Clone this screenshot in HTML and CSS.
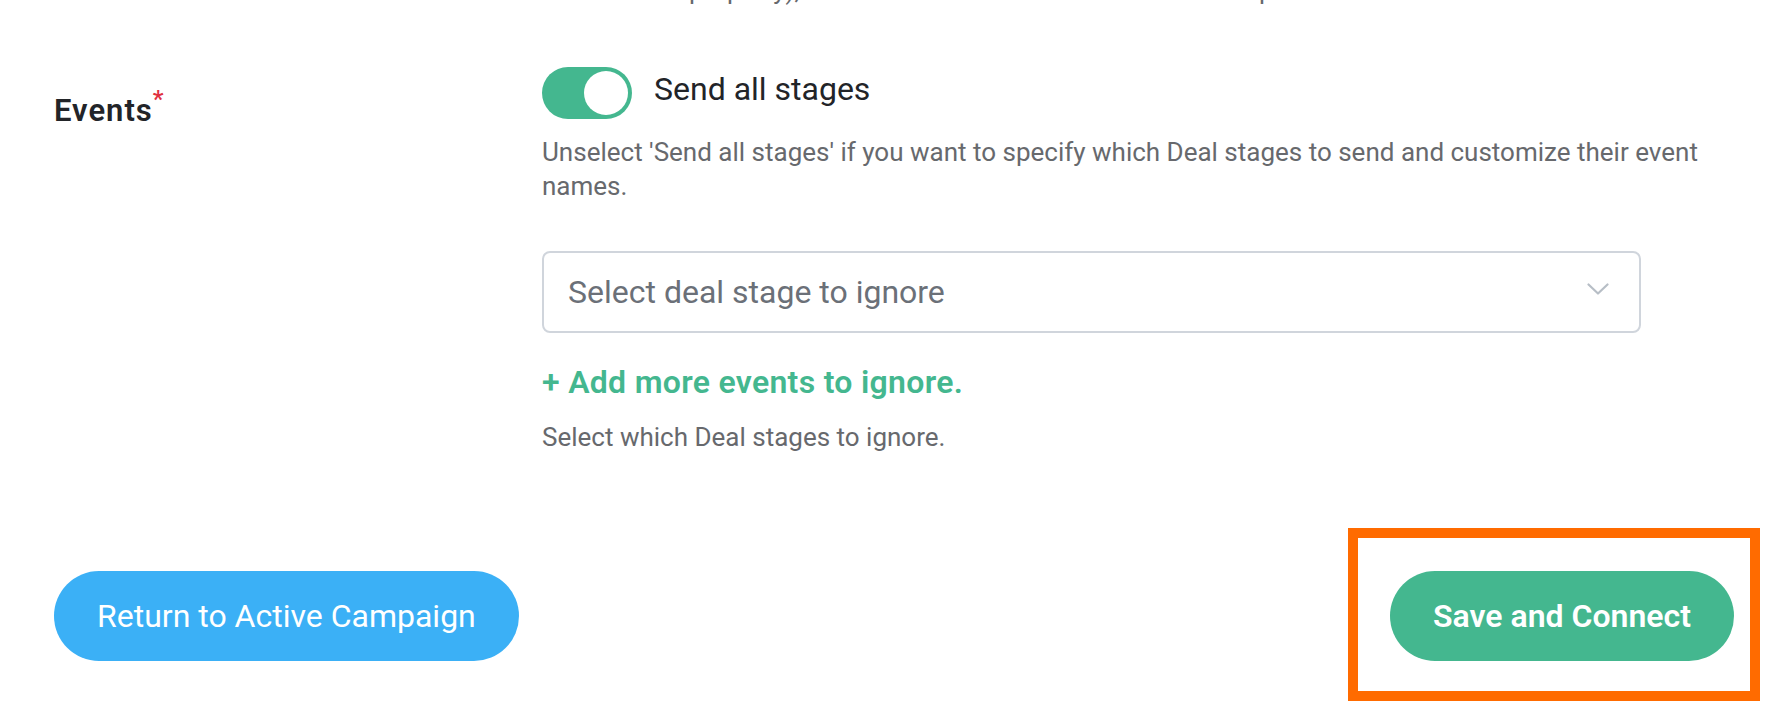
FILE: index.html
```html
<!DOCTYPE html>
<html lang="en">
<head>
<meta charset="utf-8">
<title>Events settings</title>
<link rel="stylesheet" href="styles.css">
</head>
<body>
<div class="page">
  <p class="help clipped-line">Saved in the property), otherwise each Deal is then sent to the platform.</p>

  <div class="field-row">
    <div class="field-label">Events<span class="req">*</span></div>
    <div class="field-control">
      <div class="switch-row">
        <span class="switch" role="switch" aria-checked="true"><span class="knob"></span></span>
        <span class="switch-label">Send all stages</span>
      </div>
      <p class="help help-first">Unselect 'Send all stages' if you want to specify which Deal stages to send and customize their event names.</p>

      <div class="select">
        <span class="select-placeholder">Select deal stage to ignore</span>
        <svg class="chevron" width="22" height="12" viewBox="0 0 22 12" aria-hidden="true">
          <path d="M1.5 1.5 L11 10.5 L20.5 1.5" fill="none" stroke="#b7bec6" stroke-width="2.2" stroke-linecap="round" stroke-linejoin="round"/>
        </svg>
      </div>

      <a class="add-link" href="#">+ Add more events to ignore.</a>
      <p class="help help-last">Select which Deal stages to ignore.</p>
    </div>
  </div>

  <div class="actions">
    <button class="btn btn-blue" type="button">Return to Active Campaign</button>
    <div class="highlight-wrap">
      <button class="btn btn-green" type="button">Save and Connect</button>
      <span class="highlight" aria-hidden="true"></span>
    </div>
  </div>
</div>
</body>
</html>
```

FILE: styles.css
```css
* { box-sizing: border-box; }

html, body {
  margin: 0;
  padding: 0;
  background: #ffffff;
  min-height: 712px;
}

body {
  font-family: Roboto, "Liberation Sans", Arial, sans-serif;
  color: #222428;
}

.page {
  display: flow-root;
  width: 1792px;
  min-height: 712px;
  padding: 0 58px 0 54px;
}

.help {
  margin: 0;
  font-size: 26px;
  line-height: 34px;
  color: #67696d;
}

.clipped-line {
  margin-top: -27px;
  margin-left: 488px;
  white-space: nowrap;
}

.field-row {
  display: grid;
  grid-template-columns: 488px 1fr;
  margin-top: 60px;
}

.field-label {
  padding-top: 12px;
  font-size: 31px;
  line-height: 40px;
  font-weight: 600;
  letter-spacing: 1px;
  color: #222428;
}

.req {
  color: #e0303f;
  font-size: 24px;
  vertical-align: 14px;
  margin-left: 0;
}

.field-control {
  display: flex;
  flex-direction: column;
  align-items: flex-start;
}

.switch-row {
  display: flex;
  align-items: flex-start;
  gap: 22px;
}

.switch {
  width: 90px;
  height: 52px;
  border-radius: 26px;
  background: #44b78f;
  display: flex;
  align-items: center;
  justify-content: flex-end;
  padding: 0 4px;
}

.knob {
  width: 44px;
  height: 44px;
  border-radius: 50%;
  background: #ffffff;
}

.switch-label {
  font-size: 32px;
  line-height: 44px;
  color: #222428;
}

.help-first {
  margin-top: 16px;
}

.select {
  margin-top: 48px;
  width: 1099px;
  height: 82px;
  border: 2px solid #d0d5dc;
  border-radius: 8px;
  display: flex;
  align-items: center;
  justify-content: space-between;
  padding: 0 30px 0 24px;
}

.select-placeholder {
  font-size: 32px;
  color: #6b7078;
}

.chevron {
  display: block;
  margin-top: -6px;
}

.add-link {
  margin-top: 29px;
  font-size: 32px;
  line-height: 40px;
  font-weight: 600;
  letter-spacing: 0.3px;
  color: #44b78f;
  text-decoration: none;
}

.help-last {
  margin-top: 18px;
}

.actions {
  margin-top: 117px;
  display: flex;
  justify-content: space-between;
  align-items: center;
}

.btn {
  height: 90px;
  border: 0;
  border-radius: 45px;
  padding: 0 43px;
  font-family: inherit;
  font-size: 32px;
  color: #ffffff;
  cursor: pointer;
}

.btn-blue {
  background: #3bb0f6;
  font-weight: 400;
}

.btn-green {
  background: #44b78f;
  font-weight: 600;
}

.highlight-wrap {
  position: relative;
}

.highlight {
  position: absolute;
  left: -42px;
  right: -26px;
  top: -43px;
  bottom: -40px;
  border: 10px solid #ff6b00;
  pointer-events: none;
}
```
